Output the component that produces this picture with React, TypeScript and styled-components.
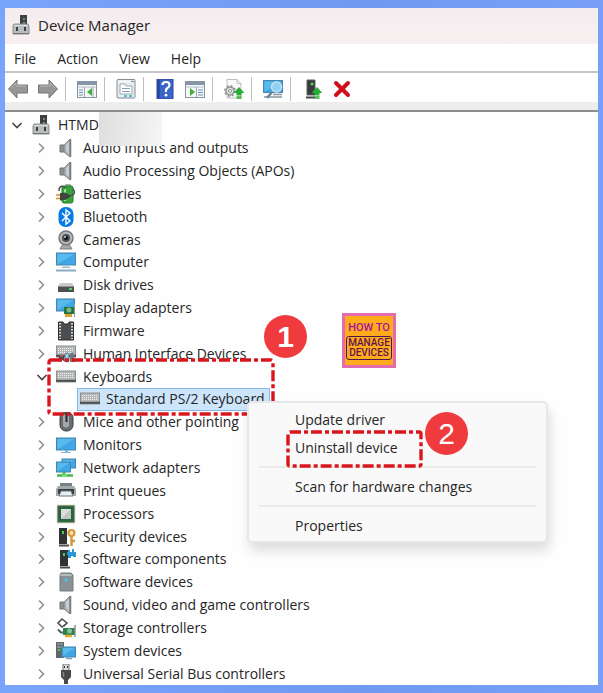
import React from "react";
import styled, { createGlobalStyle, css } from "styled-components";

const GlobalStyle = createGlobalStyle`
  * { box-sizing: border-box; }
  body { margin: 0; background: #759ff8; }
  button { font: inherit; color: inherit; background: none; border: 0; padding: 0; margin: 0; cursor: default; }
`;

const Frame = styled.div`
  position: relative;
  display: flex;
  min-height: 100vh;
  padding: 8px 5px;
  background: linear-gradient(90deg, #79a4fc, #7099f2 60%, #78a0f8);
  font-family: "Open Sans", "Noto Sans", sans-serif;
  font-size: 14px;
  line-height: 20px;
  color: #262626;
`;

const Window = styled.main`
  flex: 1;
  min-width: 0;
  display: flex;
  flex-direction: column;
  background: #fefefe;
`;

const TitleBar = styled.header`
  display: flex;
  align-items: center;
  gap: 7px;
  height: 36px;
  padding: 0 6px 2px;
  background: linear-gradient(#f3edef, #f9eff0);
`;

const Title = styled.h1`
  margin: 0;
  font-size: 15px;
  font-weight: 400;
`;

const MenuBar = styled.nav`
  display: flex;
  align-items: center;
  gap: 21px;
  height: 29px;
  padding: 2px 9px 0;
  border-bottom: 2px solid #c6c6c6;
  background: #fff;
`;

const Toolbar = styled.div`
  display: flex;
  align-items: center;
  gap: 9px;
  height: 29px;
  padding: 2px 3px 0;
  background: #fff;
`;

const ToolGroup = styled.div`
  display: flex;
  gap: 10px;
  & + & {
    margin-left: -2px;
    padding-left: 11px;
    border-left: 1px solid #bdbdbd;
  }
`;

const ToolButton = styled.button`
  display: flex;
  align-items: center;
  justify-content: center;
  width: 20px;
  height: 24px;
`;

const ToolbarEdge = styled.div`
  height: 10px;
  background: #ededed;
  border-bottom: 2px solid #8d8d8d;
`;

const Tree = styled.ul`
  flex: 1;
  display: grid;
  grid-auto-rows: minmax(20px, 1fr);
  margin: 0;
  padding: 2px 0 0;
  list-style: none;
`;

const Row = styled.li<{ $depth: number }>`
  display: flex;
  align-items: center;
  min-width: 0;
  padding-left: ${(p) => (p.$depth === 2 ? 72 : 4 + p.$depth * 25)}px;
  white-space: nowrap;
`;

const Toggle = styled.button`
  display: flex;
  align-items: center;
  justify-content: center;
  width: 16px;
  height: 20px;
  margin-right: 6px;
`;

const Entry = styled.span<{ $selected?: boolean }>`
  display: flex;
  align-items: center;
  gap: 7px;
  ${(p) =>
    p.$selected &&
    css`
      gap: 6px;
      height: 100%;
      padding: 0 4px 0 2px;
      background: #cce5fb;
      border: 1px solid #84b8e6;
    `}
`;

const Redaction = styled.div`
  position: absolute;
  left: 99px;
  top: 112px;
  width: 63px;
  height: 34px;
  background: linear-gradient(100deg, #dedede, #ececec 60%, #f6f6f6);
`;

const ContextMenu = styled.div`
  position: absolute;
  left: 247px;
  top: 401px;
  width: 301px;
  padding: 3px 10px 1px;
  display: flex;
  flex-direction: column;
  background: #f9f9f9;
  border: 2px solid #e7e7e7;
  border-radius: 5px;
  box-shadow: 2px 8px 12px rgba(0, 0, 0, 0.13);
`;

const MenuItem = styled.button`
  height: 28px;
  padding-left: 36px;
  text-align: left;
`;

const Divider = styled.hr`
  width: 100%;
  height: 2px;
  margin: 4px 0 5px;
  border: 0;
  background: #ebebeb;
`;

const Outline = styled.svg<{ $x: number; $y: number }>`
  position: absolute;
  left: ${(p) => p.$x}px;
  top: ${(p) => p.$y}px;
  fill: none;
  stroke: #d9161c;
  stroke-width: 3.4;
  stroke-dasharray: 11 3 4 3;
  pointer-events: none;
`;

const Step = styled.span<{ $x: number; $y: number; $bold?: boolean }>`
  position: absolute;
  left: ${(p) => p.$x}px;
  top: ${(p) => p.$y}px;
  display: grid;
  place-items: center;
  width: 43px;
  height: 43px;
  border-radius: 50%;
  background: #ef3b3e;
  color: #fff;
  font-family: "Liberation Sans", Arial, sans-serif;
  font-size: 30px;
  font-weight: ${(p) => (p.$bold ? 700 : 400)};
  line-height: 43px;
`;

const Logo = styled.div`
  position: absolute;
  left: 342px;
  top: 313px;
  width: 54px;
  height: 55px;
  padding-top: 4px;
  display: flex;
  flex-direction: column;
  align-items: center;
  background: #ffac1c;
  border: 3px solid #e56bb0;
  font-family: Roboto, "Liberation Sans", sans-serif;
  color: #a5129a;
`;

const LogoTop = styled.span`
  font-size: 11px;
  font-weight: 500;
  line-height: 16px;
`;

const LogoBox = styled.span`
  display: flex;
  flex-direction: column;
  align-items: center;
  width: 46px;
  padding: 1px 0;
  border: 1px solid #4d1550;
  border-radius: 3px;
  color: #61134f;
  font-size: 10px;
  font-weight: 500;
  line-height: 10px;
`;

type Icon = () => React.ReactElement;

const Svg = ({ children, size = 20 }: { children: React.ReactNode; size?: number }) => (
  <svg width={size} height={size} viewBox="0 0 20 20" aria-hidden="true">
    {children}
  </svg>
);

const Adapter: Icon = () => (
  <Svg>
    <rect x="9" y="0" width="7" height="10" fill="#3d4240" />
    <path d="M12 3h2v2h-2zM12 7h2v2h-2z" fill="#76887f" />
    <path d="M3 9h14l1 2v8H2v-8z" fill="#b8bcbd" stroke="#888d90" />
    <path d="M3 10.500h14" stroke="#dce0e2" />
    <path d="M6 12v4M14 12v4" stroke="#3c4043" strokeWidth="2" />
    <path d="M2 18.500h16" stroke="#777" />
  </Svg>
);

const Speaker: Icon = () => (
  <Svg>
    <path d="M4 7h4v7H4z" fill="#8d9294" stroke="#6f7577" />
    <path d="M8 7l6-6v18l-6-5z" fill="#a9aeb1" stroke="#83898c" />
    <path d="M10 7l3-3v12l-3-3z" fill="#c9cdd0" />
    <path d="M14.500 1v18" stroke="#747a7e" strokeWidth="1.500" />
  </Svg>
);

const Battery: Icon = () => (
  <Svg>
    <rect x="9" y="0" width="6" height="3" rx="1" fill="#a4b2a4" />
    <rect x="6" y="2" width="11" height="17" rx="2" fill="#36a538" stroke="#287a2b" />
    <path d="M9 4v13" stroke="#9cea8c" strokeWidth="2" />
    <path d="M3 7C3 1 8 1 9 5M13 12c5 0 7-4 4-7" fill="none" stroke="#4a5450" strokeWidth="1.500" />
    <path d="M0 11h5M0 14.500h5" stroke="#cb8e2c" strokeWidth="1.600" />
    <path d="M4 9l5-.5 5 2.500v2l-5 3-5 .5z" fill="#41443d" />
  </Svg>
);

const Bluetooth: Icon = () => (
  <Svg>
    <rect x="2.500" y="0" width="15" height="20" rx="7" fill="#087ae4" />
    <path d="M6 6l8 8-4 3V3l4 3-8 8" fill="none" stroke="#fff" strokeWidth="1.400" />
  </Svg>
);

const Camera: Icon = () => (
  <Svg>
    <path d="M7 14l-3 5h12l-3-5" fill="#a9abac" stroke="#7a7c7d" />
    <circle cx="10" cy="8" r="7" fill="#b4b7b9" stroke="#77797b" strokeWidth="1.500" />
    <circle cx="10" cy="8" r="4" fill="#4c5154" />
    <circle cx="10" cy="8" r="2" fill="#111" />
    <circle cx="9" cy="7" r="1" fill="#c3d6e2" />
  </Svg>
);

const Screen = ({ x, y, w, h }: { x: number; y: number; w: number; h: number }) => (
  <g>
    <rect x={x} y={y} width={w} height={h} fill="#3fa7e5" stroke="#4586ae" />
    <path d={`M${x + 1} ${y + h - 1}V${y + 1}H${x + w - 1}z`} fill="#75cbf6" opacity=".5" />
  </g>
);

const Computer: Icon = () => (
  <Svg>
    <Screen x={0.5} y={1} w={19} h={12} />
    <path d="M7 14.500h6l2 1.500H5z" fill="#9bbacd" />
    <path d="M0 18.500h20" stroke="#8cabc3" strokeWidth="2" />
  </Svg>
);

const Disk: Icon = () => (
  <Svg>
    <path d="M4 8h12l2 3H2z" fill="#c8cbcc" />
    <path d="M2 11h16v6H2z" fill="#4c5052" />
    <path d="M2 11.500h16" stroke="#909495" />
    <path d="M13 14h3" stroke="#48d54c" strokeWidth="2" />
  </Svg>
);

const Display: Icon = () => (
  <Svg>
    <Screen x={0.5} y={1} w={18} h={12} />
    <rect x="8" y="9" width="11" height="7" fill="#27733d" />
    <path d="M18.500 6v13" stroke="#8e9b90" />
    <circle cx="13" cy="12" r="2.500" fill="#7bb888" />
    <path d="M9 17.500h7" stroke="#d9a334" strokeWidth="3" />
  </Svg>
);

const Firmware: Icon = () => (
  <Svg>
    <path d="M2.500 1H7l1 2h4l1-2h4.500v18h-15z" fill="#4b4e50" stroke="#292b2c" />
    <path d="M4 2v16M16 2v16" stroke="#d5d7d8" strokeWidth="2" strokeDasharray="1.500 1.500" />
  </Svg>
);

const Keys = ({ y }: { y: number }) => (
  <g>
    <rect x="0.500" y={y} width="19" height="11" fill="#b5b8b9" stroke="#8d9091" />
    <path d={`M2 ${y + 2.5}h16M2 ${y + 4.5}h16M2 ${y + 6.5}h16`} stroke="#f1f2f2" strokeDasharray="1 1" />
    <path d={`M0 ${y + 9.8}h20`} stroke="#4c4f50" strokeWidth="2" />
  </g>
);

const Keyboard: Icon = () => (
  <Svg>
    <Keys y={4} />
  </Svg>
);

const Hid: Icon = () => (
  <Svg>
    <Keys y={2} />
    <path d="M2 18l1-6q2-3 5 0l1 6-4-3z" fill="#484d52" />
    <rect x="9" y="9" width="4" height="9" rx="2" fill="#a4d1e8" stroke="#527488" />
    <path d="M14 18v-8l3-2 2 10z" fill="#70777b" />
    <path d="M4 12h3" stroke="#da594c" strokeWidth="1.500" />
  </Svg>
);

const Mouse: Icon = () => (
  <Svg>
    <rect x="4" y="0" width="13" height="19" rx="6" fill="#686d70" stroke="#3b3e40" />
    <path d="M7 3v11q3 3 6 0V3" fill="#a4a8aa" />
    <path d="M10.500 1v9" stroke="#282a2c" strokeWidth="2" />
  </Svg>
);

const Monitor: Icon = () => (
  <Svg>
    <Screen x={0.5} y={3} w={19} h={12} />
    <path d="M9 15h3v2h3v1H5v-1h4z" fill="#87b4cf" />
  </Svg>
);

const Network: Icon = () => (
  <Svg>
    <Screen x={6} y={1} w={13.5} h={9} />
    <Screen x={0.5} y={4} w={14} h={10} />
    <path d="M8 14v4" stroke="#43b649" strokeWidth="3" />
    <path d="M1 17.500h16" stroke="#43b649" strokeWidth="2.500" />
    <path d="M6 17.500h5" stroke="#80df74" strokeWidth="2.500" />
  </Svg>
);

const Printer: Icon = () => (
  <Svg>
    <path d="M4 2h12v4H4z" fill="#738385" />
    <path d="M2 5h16l2 3v7H0V8z" fill="#a3aaad" />
    <path d="M2 8h16v5H2z" fill="#393d40" />
    <path d="M5 10h10l2 5H3z" fill="#e9eff1" stroke="#63777e" />
  </Svg>
);

const Processor: Icon = () => (
  <Svg>
    <rect x="1.500" y="1.500" width="17" height="17" fill="#286443" stroke="#8c8658" strokeWidth="1.500" strokeDasharray="1 1" />
    <rect x="5" y="5" width="10" height="10" fill="#dcdedc" />
    <path d="M5 15L15 5v10z" fill="#c1c7c2" />
  </Svg>
);

const Tower = ({ x = 3 }: { x?: number }) => (
  <g>
    <rect x={x} y="1" width="8" height="16" fill="#303334" />
    <rect x={x + 3} y="4" width="2" height="3" fill="#45d04b" />
    <path d={`M${x} 18.500h10`} stroke="#4b4d4d" strokeWidth="2" />
  </g>
);

const Security: Icon = () => (
  <Svg>
    <Tower />
    <circle cx="15.500" cy="6" r="3" fill="#fbe2ac" stroke="#d69a3c" strokeWidth="2.200" />
    <path d="M15.500 9v10M16 14h3" stroke="#d69a3c" strokeWidth="2.500" />
  </Svg>
);

const Component: Icon = () => (
  <Svg>
    <Tower x={4} />
    <path d="M12 1h2v2h2V0h2v3h2v5h-3v-1h-2v2h-3V6h-1V3h1z" fill="#2b98d8" />
  </Svg>
);

const SoftwareDevice: Icon = () => (
  <Svg>
    <path d="M5 1h10l2 2v16H4V3z" fill="#899194" stroke="#737d82" />
    <path d="M5 2h10l1 2H4z" fill="#b4bec1" />
    <path d="M10 6l2 2-2 2-2-2z" fill="#43c4ed" />
  </Svg>
);

const Storage: Icon = () => (
  <Svg>
    <path d="M6 1l5 4-5 4-4-4zM11 5l-3 3" fill="none" stroke="#4a4e50" strokeWidth="1.600" />
    <path d="M2 11.500l3 3h5" fill="none" stroke="#5b6062" strokeWidth="2" />
    <path d="M7 10h12v7H7z" fill="#2c8351" />
    <circle cx="13.500" cy="13" r="2.500" fill="#8bbf94" />
    <path d="M19 7v12" stroke="#899790" strokeWidth="1.500" />
    <path d="M9 18h7" stroke="#e2af31" strokeWidth="2.500" />
  </Svg>
);

const SystemIcon: Icon = () => (
  <Svg>
    <path d="M0 1h8v16H0z" fill="#606769" />
    <path d="M1 3h6M1 6h6" stroke="#aeb5b5" />
    <path d="M2 8h2v2H2z" fill="#4fce52" />
    <Screen x={6} y={6} w={13.5} h={10} />
    <path d="M10 17.500h6" stroke="#7da3b8" strokeWidth="1.500" />
  </Svg>
);

const Usb: Icon = () => (
  <Svg>
    <path d="M7 0h6v7H7z" fill="#d9dbdc" stroke="#6f7375" />
    <path d="M8.500 2v2M11.500 2v2" stroke="#333" />
    <path d="M5 6h10v7l-3 3v4H8v-4l-3-3z" fill="#47494b" />
    <path d="M7.500 8v5" stroke="#818486" strokeWidth="1.500" />
  </Svg>
);

const Back: Icon = () => (
  <Svg>
    <path d="M0.500 10L9 1v5h10.500v8H9v5z" fill="#969696" stroke="#757575" />
    <path d="M3 9l5-5v3h10" fill="none" stroke="#b8b8b8" />
  </Svg>
);

const Forward: Icon = () => (
  <Svg>
    <path d="M19.500 10L11 1v5H0.500v8H11v5z" fill="#969696" stroke="#757575" />
    <path d="M2 7h10V4l5 5" fill="none" stroke="#b8b8b8" />
  </Svg>
);

const Pane = () => (
  <g>
    <rect x="0.500" y="2.500" width="19" height="16" fill="#f5f7f8" stroke="#8796a2" />
    <path d="M1 4.500h18" stroke="#8496a7" strokeWidth="3" />
    <path d="M1 8h18" stroke="#b6c0c8" />
  </g>
);

const ConsoleTree: Icon = () => (
  <Svg>
    <Pane />
    <path d="M2 11h4M2 13.500h4M2 16h4" stroke="#6b93b4" strokeWidth="1.200" />
    <path d="M7.500 8v10M16 8v10" stroke="#9aabb8" />
    <path d="M15 9v8l-5-4z" fill="#42af36" />
  </Svg>
);

const ActionPane: Icon = () => (
  <Svg>
    <Pane />
    <path d="M11.500 8v10" stroke="#9aabb8" />
    <path d="M5 9v8l5-4z" fill="#42af36" />
    <path d="M13 11h5M13 13.500h5M13 16h5" stroke="#6b93b4" strokeWidth="1.200" />
  </Svg>
);

const Properties: Icon = () => (
  <Svg>
    <rect x="1" y="0.500" width="18" height="18.500" rx="1" fill="#e9ecee" stroke="#858b91" />
    <path d="M2 2.500h12" stroke="#fff" />
    <path d="M15 2.500h3" stroke="#798692" />
    <path d="M4 5h5l1 2h6v8H4z" fill="#fff" stroke="#9aa8b1" />
    <path d="M6 9.500h8M6 12.500h8" stroke="#829fb3" />
    <path d="M8 17h3M13 17h3" stroke="#2ba9ce" strokeWidth="1.500" />
  </Svg>
);

const Help: Icon = () => (
  <Svg>
    <rect x="2" y="0" width="16" height="20" fill="#3b64c8" stroke="#2f4795" />
    <path d="M3.500 1v18" stroke="#243f9c" strokeWidth="2" />
    <path d="M7.500 6q0-3 3.500-3t3.500 3q0 2-2 3t-1.500 4" fill="none" stroke="#fff" strokeWidth="2.200" />
    <circle cx="11" cy="16.200" r="1.400" fill="#fff" />
  </Svg>
);

const UpArrow = () => <path d="M15 8l5.500 6H17.500v2h-5v-2h-3zM12.500 16.500h5v1.200h-5zM12.500 18.300h5v1.500h-5z" fill="#28ae34" />;

const UpdateDriver: Icon = () => (
  <Svg>
    <path d="M3 .5h10l4 4V19H3z" fill="#fafafa" stroke="#bdbdbd" />
    <path d="M13 .5v4h4" fill="none" stroke="#bdbdbd" />
    <circle cx="6" cy="12" r="4" fill="#e1e1e1" stroke="#909090" strokeWidth="1.500" />
    <circle cx="6" cy="12" r="5.200" fill="none" stroke="#909090" strokeWidth="1.500" strokeDasharray="2 2.080" />
    <circle cx="6" cy="12" r="1.500" fill="#fff" stroke="#909090" />
    <UpArrow />
  </Svg>
);

const Scan: Icon = () => (
  <Svg>
    <Screen x={0.5} y={1.5} w={19} h={12} />
    <path d="M1 18h18M10 15.500h9" stroke="#87969f" strokeWidth="1.500" />
    <path d="M9 13l-5 6" stroke="#6d8493" strokeWidth="2.500" />
    <circle cx="13.500" cy="8" r="5" fill="#8fd0f2" stroke="#c3e2ef" strokeWidth="1.500" />
  </Svg>
);

const Enable: Icon = () => (
  <Svg>
    <path d="M5 1h8v15H5z" fill="#373b3b" stroke="#606363" />
    <path d="M4 18.500h9" stroke="#444" strokeWidth="2" />
    <circle cx="10" cy="5" r="1.500" fill="#56d854" />
    <UpArrow />
  </Svg>
);

const Remove: Icon = () => (
  <Svg>
    <path d="M4 4l12 12M16 4L4 16" stroke="#cf101a" strokeWidth="4" strokeLinecap="round" />
  </Svg>
);

const Chevron = ({ open }: { open?: boolean }) => (
  <svg width="12" height="12" viewBox="0 0 12 12" fill="none" aria-hidden="true">
    {open ? (
      <path d="M1.500 4L6 8.500 10.500 4" stroke="#444" strokeWidth="1.600" />
    ) : (
      <path d="M3 1.500L7.500 6 3 10.500" stroke="#929292" strokeWidth="1.600" />
    )}
  </svg>
);

const toolGroups: [string, Icon][][] = [
  [["Back", Back], ["Forward", Forward]],
  [["Show console tree", ConsoleTree]],
  [["Properties", Properties]],
  [["Help", Help], ["Show action pane", ActionPane]],
  [["Update driver", UpdateDriver]],
  [["Scan for hardware changes", Scan]],
  [["Enable device", Enable], ["Uninstall device", Remove]],
];

type Node = { label: string; icon: Icon; depth: number; open?: boolean };

const category = (label: string, icon: Icon, open = false): Node => ({ label, icon, depth: 1, open });

const nodes: Node[] = [
  { label: "HTMD", icon: Adapter, depth: 0, open: true },
  category("Audio inputs and outputs", Speaker),
  category("Audio Processing Objects (APOs)", Speaker),
  category("Batteries", Battery),
  category("Bluetooth", Bluetooth),
  category("Cameras", Camera),
  category("Computer", Computer),
  category("Disk drives", Disk),
  category("Display adapters", Display),
  category("Firmware", Firmware),
  category("Human Interface Devices", Hid),
  category("Keyboards", Keyboard, true),
  { label: "Standard PS/2 Keyboard", icon: Keyboard, depth: 2 },
  category("Mice and other pointing", Mouse),
  category("Monitors", Monitor),
  category("Network adapters", Network),
  category("Print queues", Printer),
  category("Processors", Processor),
  category("Security devices", Security),
  category("Software components", Component),
  category("Software devices", SoftwareDevice),
  category("Sound, video and game controllers", Speaker),
  category("Storage controllers", Storage),
  category("System devices", SystemIcon),
  category("Universal Serial Bus controllers", Usb),
];

export default function App() {
  return (
    <>
      <GlobalStyle />
      <Frame>
        <Window>
          <TitleBar>
            <Adapter />
            <Title>Device Manager</Title>
          </TitleBar>
          <MenuBar>
            {["File", "Action", "View", "Help"].map((name) => (
              <button key={name}>{name}</button>
            ))}
          </MenuBar>
          <Toolbar role="toolbar" aria-label="Device actions">
            {toolGroups.map((group, i) => (
              <ToolGroup key={i}>
                {group.map(([label, Glyph]) => (
                  <ToolButton key={label} aria-label={label}>
                    <Glyph />
                  </ToolButton>
                ))}
              </ToolGroup>
            ))}
          </Toolbar>
          <ToolbarEdge />
          <Tree role="tree" aria-label="Devices">
            {nodes.map(({ label, icon: Glyph, depth, open }) => (
              <Row key={label} $depth={depth} role="treeitem" aria-level={depth + 1} aria-selected={depth === 2}>
                {depth < 2 && (
                  <Toggle aria-label={`${open ? "Collapse" : "Expand"} ${label}`}>
                    <Chevron open={open} />
                  </Toggle>
                )}
                <Entry $selected={depth === 2}>
                  <Glyph />
                  {label}
                </Entry>
              </Row>
            ))}
          </Tree>
        </Window>

        <Redaction />
        <Logo>
          <LogoTop>HOW TO</LogoTop>
          <LogoBox>
            <span>MANAGE</span>
            <span>DEVICES</span>
          </LogoBox>
        </Logo>
        <Outline $x={47} $y={358} width="229" height="59">
          <rect x="2" y="2" width="224" height="54" rx="2" />
        </Outline>
        <ContextMenu role="menu">
          <MenuItem role="menuitem">Update driver</MenuItem>
          <MenuItem role="menuitem">Uninstall device</MenuItem>
          <Divider />
          <MenuItem role="menuitem">Scan for hardware changes</MenuItem>
          <Divider />
          <MenuItem role="menuitem">Properties</MenuItem>
        </ContextMenu>
        <Outline $x={286} $y={430} width="138" height="39">
          <rect x="2" y="2" width="133" height="34" rx="2" />
        </Outline>
        <Step $x={264} $y={315} $bold>
          1
        </Step>
        <Step $x={425} $y={412}>
          2
        </Step>
      </Frame>
    </>
  );
}
